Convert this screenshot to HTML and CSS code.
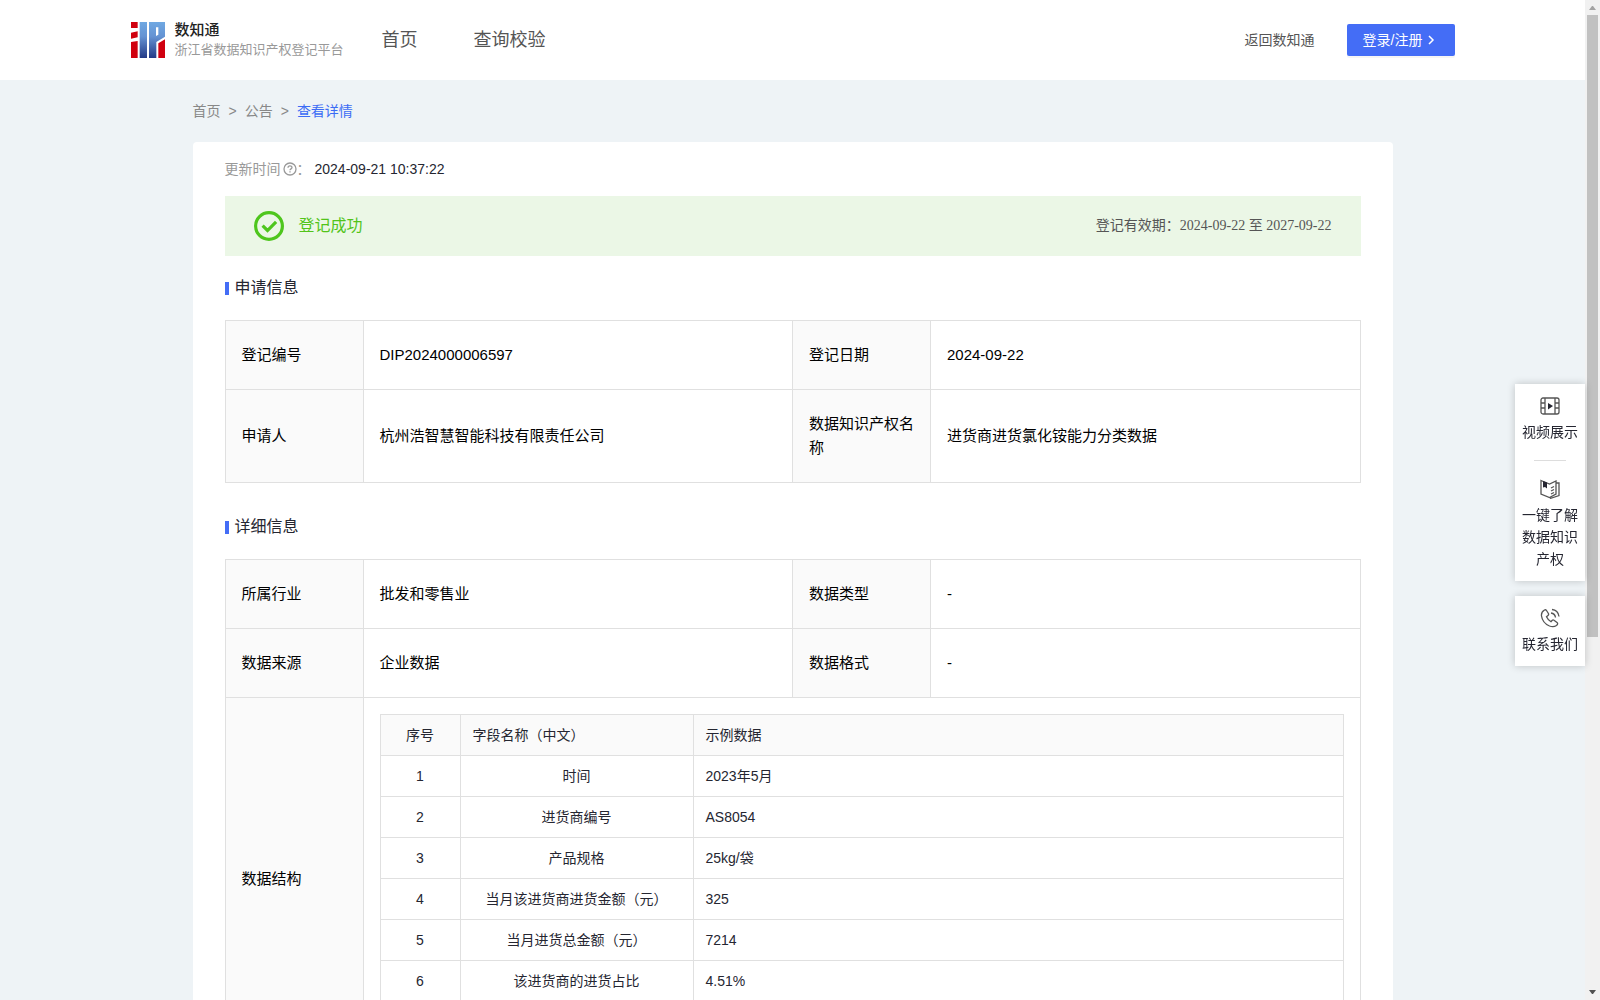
FILE: index.html
```html
<!DOCTYPE html>
<html lang="zh-CN">
<head>
  <meta charset="UTF-8" />
  <meta name="viewport" content="width=device-width, initial-scale=1" />
  <title>浙江省数据知识产权登记平台</title>
  <link rel="stylesheet" href="styles.css">
</head>
<body>

  <div class="page">
    <header class="header">
      <div class="header-inner">
        <a class="logo" href="#">
          <svg class="logo-mark" viewBox="0 0 102 108">
            <defs>
              <linearGradient id="azul" x1="0" y1="0" x2="0" y2="108" gradientUnits="userSpaceOnUse">
                <stop offset="0" stop-color="#6fa8e2" />
                <stop offset="0.4" stop-color="#6593d3" />
                <stop offset="1" stop-color="#233a86" />
              </linearGradient>
            </defs>
            <path fill="#d0000f" d="M0 0h20v18H0zM0 32l20-4v18L0 50zM0 60l20-3v51H0zM82 64l20-12v56H82z" />
            <path fill="url(#azul)" fill-rule="evenodd" d="M26 0h22v108H26zM54 0h48v44L76 60v48H54zM75 16v26l7-4V16z" />
          </svg>
          <span class="logo-text">
            <strong>数知通</strong>
            <span>浙江省数据知识产权登记平台</span>
          </span>
        </a>
        <nav class="nav">
          <a href="#">首页</a>
          <a href="#">查询校验</a>
        </nav>
        <a class="back" href="#">返回数知通</a>
        <button class="btn-login" type="button">
          登录/注册
          <svg viewBox="0 0 8 10"><path d="M2 1l4 4-4 4" /></svg>
        </button>
      </div>
    </header>

    <main class="main">
      <nav class="breadcrumb">
        <a href="#">首页</a>
        <span>&gt;</span>
        <a href="#">公告</a>
        <span>&gt;</span>
        <a class="active" href="#">查看详情</a>
      </nav>

      <div class="card">
        <div class="update">
          <span>更新时间</span>
          <svg viewBox="0 0 14 14">
            <circle cx="7" cy="7" r="6" />
            <path d="M5 5.7C5 3.2 9 3.3 9 5.5 9 6.9 7 6.8 7 8.3M7 9.3v1.3" />
          </svg>
          <span class="colon">：</span>
          <time>2024-09-21 10:37:22</time>
        </div>

        <div class="banner">
          <svg viewBox="0 0 30 30">
            <circle cx="15" cy="15" r="13.4" />
            <path d="M8.6 14.7l4.9 4.8 8.6-8.7" />
          </svg>
          <span class="banner-status">登记成功</span>
          <span class="banner-date">登记有效期：2024-09-22 至 2027-09-22</span>
        </div>

        <h2 class="title">申请信息</h2>
        <table class="info">
          <colgroup><col class="col-label"><col><col class="col-label"><col></colgroup>
          <tr>
            <th>登记编号</th>
            <td>DIP2024000006597</td>
            <th>登记日期</th>
            <td>2024-09-22</td>
          </tr>
          <tr>
            <th>申请人</th>
            <td>杭州浩智慧智能科技有限责任公司</td>
            <th>数据知识产权名称</th>
            <td>进货商进货氯化铵能力分类数据</td>
          </tr>
        </table>

        <h2 class="title">详细信息</h2>
        <table class="info">
          <colgroup><col class="col-label"><col><col class="col-label"><col></colgroup>
          <tr>
            <th>所属行业</th>
            <td>批发和零售业</td>
            <th>数据类型</th>
            <td>-</td>
          </tr>
          <tr>
            <th>数据来源</th>
            <td>企业数据</td>
            <th>数据格式</th>
            <td>-</td>
          </tr>
          <tr>
            <th>数据结构</th>
            <td class="nested" colspan="3">
              <table class="fields">
                <colgroup><col class="col-no"><col class="col-name"><col></colgroup>
                <thead>
                  <tr><th>序号</th><th>字段名称（中文）</th><th>示例数据</th></tr>
                </thead>
                <tbody>
                  <tr><td>1</td><td>时间</td><td>2023年5月</td></tr>
                  <tr><td>2</td><td>进货商编号</td><td>AS8054</td></tr>
                  <tr><td>3</td><td>产品规格</td><td>25kg/袋</td></tr>
                  <tr><td>4</td><td>当月该进货商进货金额（元）</td><td>325</td></tr>
                  <tr><td>5</td><td>当月进货总金额（元）</td><td>7214</td></tr>
                  <tr><td>6</td><td>该进货商的进货占比</td><td>4.51%</td></tr>
                  <tr class="empty"><td></td><td></td><td></td></tr>
                </tbody>
              </table>
            </td>
          </tr>
        </table>
      </div>
    </main>
  </div>

  <!-- 右侧悬浮工具栏 -->
  <aside class="side">
    <div class="side-card">
      <a href="#">
        <svg viewBox="0 0 20 20">
          <rect x="1" y="2" width="18" height="16" rx="2" />
          <path d="M5 2v16M15 2v16M1 7h4M1 12h4M15 7h4M15 12h4" />
          <path class="solid" d="M8 7l5 3-5 3.500z" />
        </svg>
        视频展示
      </a>
      <hr>
      <a href="#">
        <svg viewBox="0 0 20 20">
          <path d="M1 1.500L9.500 5 16 2v13l-6.500 3.500L1 15zM16 4h3v12.500L10 19.500M11 9l3-1.500M11 12l3-1.500M11 15l3-1.500" />
          <path class="solid" d="M3 2l4 1.500v6L5 8 3 8.500z" />
        </svg>
        一键了解数据知识产权
      </a>
    </div>
    <div class="side-card">
      <a href="#">
        <svg viewBox="0 0 20 20">
          <path d="M4.500 2Q1 4 1.500 8q1 7 8 10 4 1.500 7-.5 2-1.700.5-3l-3-2.300q-1-.6-2 .3l-1 1.200q-3-1.700-4.500-5L8 7.500q1-.8.400-2L6.500 2.500Q5.700 1.300 4.500 2zM11 5q4 .5 4.500 4.500M12 1.500q6 .5 7 7" />
        </svg>
        联系我们
      </a>
    </div>
  </aside>

  <div class="scrollbar">
    <svg viewBox="0 0 7 4"><path fill="#a3a3a3" d="M0 4h7L4 0H3z" /></svg>
    <div class="thumb"></div>
    <svg viewBox="0 0 7 4"><path fill="#505050" d="M0 0h7L4 4H3z" /></svg>
  </div>

</body>
</html>
```
FILE: styles.css
```css
* {
  box-sizing: border-box;
}

body {
  margin: 0;
  height: 100vh;
  display: flex;
  overflow: hidden;
  font-family: "Liberation Sans", "Noto Sans CJK SC", sans-serif;
  font-size: 14px;
  line-height: 22px;
  color: #252631;
  background: #eef3f6;
}

a {
  color: inherit;
  text-decoration: none;
}

.page {
  flex: 1;
  overflow-y: auto;
  scrollbar-width: none;
}

.header {
  background: #fff;
}

.header-inner {
  max-width: 1324px;
  height: 80px;
  margin: 0 auto;
  display: flex;
  align-items: center;
  color: #555;
}

.logo {
  display: flex;
  align-items: center;
  gap: 10px;
}

.logo-mark {
  width: 34px;
  height: 36px;
}

.logo-text {
  display: flex;
  flex-direction: column;
  font-size: 13px;
  line-height: 20px;
  color: #999;
}

.logo-text strong {
  font-size: 15px;
  font-weight: 500;
  color: #222;
}

.nav {
  display: flex;
  gap: 56px;
  margin-left: 38px;
  font-size: 18px;
}

.back {
  margin-left: auto;
  margin-right: 32px;
}

.btn-login {
  display: flex;
  align-items: center;
  gap: 5px;
  width: 108px;
  height: 32px;
  padding: 0 16px;
  border: none;
  border-radius: 2px;
  background: #446df6;
  box-shadow: 0 2px 0 rgba(0, 0, 0, 0.04);
  color: #fff;
  font: inherit;
  white-space: nowrap;
  cursor: pointer;
}

.btn-login svg {
  width: 8px;
  height: 10px;
  fill: none;
  stroke: #fff;
  stroke-width: 1.5;
}

.main {
  max-width: 1200px;
  margin: 0 auto;
}

.breadcrumb {
  display: flex;
  align-items: center;
  gap: 8px;
  height: 62px;
  color: #888;
}

.breadcrumb .active {
  color: #3c6cf5;
}

.card {
  padding: 16px 32px;
  margin-bottom: 32px;
  border-radius: 4px;
  background: #fff;
}

.update {
  display: flex;
  align-items: center;
  margin-bottom: 16px;
  color: #999;
}

.update svg {
  width: 14px;
  height: 14px;
  margin-left: 2px;
  fill: none;
  stroke: #999;
  stroke-width: 1.3;
}

.update time {
  margin-left: 4px;
  color: #252631;
}

.banner {
  display: flex;
  align-items: center;
  height: 60px;
  padding: 0 29px;
  margin-bottom: 20px;
  background: #ebf7e6;
}

.banner svg {
  width: 30px;
  height: 30px;
  margin-right: 15px;
  fill: none;
  stroke: #4ec61d;
  stroke-width: 3.2;
}

.banner-status {
  font-size: 16px;
  color: #52c41a;
}

.banner-date {
  margin-left: auto;
  font-family: "Liberation Serif", "Noto Sans CJK SC", serif;
  color: #555;
}

.title {
  display: flex;
  align-items: center;
  gap: 6px;
  margin: 0 0 20px;
  font-size: 16px;
  line-height: 24px;
  font-weight: 400;
}

.title::before {
  content: "";
  width: 4px;
  height: 13px;
  background: #446df6;
}

table {
  width: 100%;
  table-layout: fixed;
  border-collapse: collapse;
}

th,
td {
  border: 1px solid #e0e0e0;
  font-weight: 400;
  text-align: left;
}

th {
  background: #fafafa;
}

.info {
  margin-bottom: 32px;
  font-size: 15px;
  line-height: 24px;
  color: #000;
}

.info th,
.info td {
  padding: 22px 16px;
}

.info .nested {
  padding: 16px;
}

.col-label {
  width: 138px;
}

.info .fields {
  margin: 0;
  font-size: 14px;
  line-height: 22px;
  color: #252631;
}

.info .fields th,
.info .fields td {
  padding: 9px 12px;
}

.fields td:nth-child(-n+2),
.fields th:first-child {
  text-align: center;
}

.fields .empty {
  height: 41px;
}

.col-no {
  width: 80px;
}

.col-name {
  width: 233px;
}

.side {
  position: fixed;
  top: 384px;
  right: 15px;
  width: 70px;
  display: flex;
  flex-direction: column;
  gap: 15px;
}

.side-card {
  padding: 12px 0 11px;
  background: #fff;
  box-shadow: 0 0 8px rgba(0, 0, 0, 0.2);
}

.side-card a {
  display: flex;
  flex-direction: column;
  align-items: center;
  gap: 5px;
  padding: 0 7px;
  text-align: center;
}

.side-card svg {
  width: 20px;
  height: 20px;
  fill: none;
  stroke: #555;
  stroke-width: 1.3;
}

.side-card .solid {
  fill: #252631;
  stroke: none;
}

.side-card hr {
  width: 32px;
  margin: 17px auto 18px;
  border: none;
  border-top: 1px solid #ddd;
}

.scrollbar {
  width: 15px;
  display: flex;
  flex-direction: column;
  align-items: center;
  padding: 6px 0;
  background: #f1f1f1;
}

.scrollbar svg {
  width: 7px;
  height: 4px;
}

.thumb {
  width: 11px;
  height: 63%;
  margin: 5px 0 auto;
  background: #c1c1c1;
}
```
